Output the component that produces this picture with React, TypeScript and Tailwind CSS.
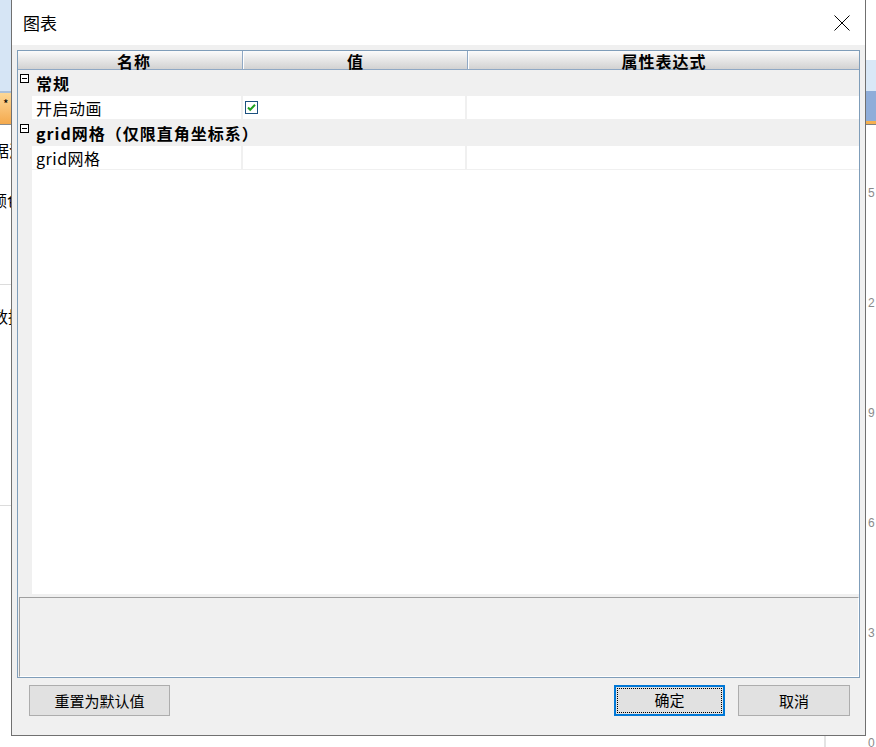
import React from 'react'

const MinusBox = () => (
  <svg width="9" height="9" viewBox="0 0 9 9" className="block">
    <rect x="0.5" y="0.5" width="8" height="8" fill="white" stroke="#000" />
    <line x1="2" y1="4.5" x2="7" y2="4.5" stroke="#000" />
  </svg>
)

const CheckBox = () => (
  <svg width="13" height="13" viewBox="0 0 13 13" className="block">
    <rect x="0.5" y="0.5" width="12" height="12" fill="white" stroke="#1c5180" />
    <path d="M3 6.5 L5.2 8.8 L10 3.8" fill="none" stroke="#21a121" strokeWidth="2" />
  </svg>
)

const CloseIcon = () => (
  <svg width="16" height="16" viewBox="0 0 16 16" className="block">
    <path d="M0.5 0.5 L15.5 15.5 M15.5 0.5 L0.5 15.5" stroke="#000" strokeWidth="1" />
  </svg>
)

const CategoryRow = ({ label }: { label: React.ReactNode }) => (
  <div className="flex h-[26px] items-center bg-[#f0f0f0]">
    <div className="w-[14px] self-stretch pl-[2px] pt-[4px]">
      <MinusBox />
    </div>
    <div className="pl-[4px] text-[16px] font-bold leading-[22px] tracking-[1px] text-black">{label}</div>
  </div>
)

const ItemRow = ({ label, value }: { label: string; value?: React.ReactNode }) => (
  <div className="flex h-[24px]">
    <div className="w-[14px] bg-[#f0f0f0]" />
    <div className="flex w-[211px] items-center border-r-2 border-b border-[#f0f0f0] bg-white pl-[4px] text-[16px] tracking-[0.5px]">
      {label}
    </div>
    <div className="flex w-[224px] items-center border-r-2 border-b border-[#f0f0f0] bg-white pl-[2px]">
      {value}
    </div>
    <div className="flex-1 border-b border-[#f0f0f0] bg-white" />
  </div>
)

const Button = ({ label, width, focused }: { label: string; width: string; focused?: boolean }) => (
  <button
    className={
      focused
        ? `${width} h-[31px] border-2 border-[#0078d7] bg-[#e1e1e1] p-[1px]`
        : `${width} h-[31px] border border-[#adadad] bg-[#e1e1e1]`
    }
  >
    {focused ? (
      <div className="flex h-full w-full items-center justify-center border border-dotted border-black text-[15px]">
        {label}
      </div>
    ) : (
      <span className="text-[15px]">{label}</span>
    )}
  </button>
)

const numbers = ['5', '2', '9', '6', '3', '0']

export default function App() {
  return (
    <div className="flex h-[747px] w-[876px] overflow-hidden bg-white font-['Noto_Sans_CJK_SC',sans-serif] text-black">
      {/* background app, left edge */}
      <div className="flex w-[11px] shrink-0 flex-col overflow-hidden">
        <div className="h-[91px] shrink-0 bg-[#d6e5f5]" />
        <div className="h-[2px] shrink-0 bg-[#a9bfd9]" />
        <div className="h-[31px] shrink-0 bg-gradient-to-b from-[#fcd896] to-[#f4a94c] pl-[3px] text-[12px] leading-[22px]">*</div>
        <div className="h-[1px] shrink-0 bg-[#8c8c8c]" />
        <div className="h-[15px] shrink-0" />
        <div className="ml-[-23px] h-[20px] shrink-0 whitespace-nowrap text-[16px] leading-[20px]">数据源</div>
        <div className="h-[30px] shrink-0" />
        <div className="ml-[-9px] h-[20px] shrink-0 whitespace-nowrap text-[16px] leading-[20px]">颜色</div>
        <div className="h-[74px] shrink-0" />
        <div className="h-[1px] shrink-0 bg-[#dcdcdc]" />
        <div className="h-[21px] shrink-0" />
        <div className="ml-[-8px] h-[20px] shrink-0 whitespace-nowrap text-[16px] leading-[20px]">数据</div>
        <div className="h-[179px] shrink-0" />
        <div className="h-[1px] shrink-0 bg-[#dcdcdc]" />
      </div>

      {/* dialog column */}
      <div className="flex w-[855px] shrink-0 flex-col">
        <div className="flex h-[736px] shrink-0 flex-col border-x border-b border-[#707070] bg-[#f0f0f0]">
          <div className="flex h-[45px] shrink-0 items-center justify-between bg-white pl-[11px] pr-[15px]">
            <span className="text-[17px]">图表</span>
            <CloseIcon />
          </div>

          <div className="flex flex-1 flex-col px-[5px] pt-[5px]">
            <div className="flex h-[628px] shrink-0 flex-col border border-[#7f9db9] bg-[#f0f0f0]">
              {/* header */}
              <div className="flex h-[19px] shrink-0 border-b border-[#8fa8c4] bg-gradient-to-b from-[#fbfbfb] to-[#d2d2d2] text-[16px] font-bold leading-[20px] tracking-[1px]">
                <div className="w-[225px] border-r border-[#8fa8c4] pl-[8px] text-center">名称</div>
                <div className="w-[225px] border-x border-l-white border-r-[#8fa8c4] text-center">值</div>
                <div className="flex-1 border-l border-white text-center">属性表达式</div>
              </div>

              {/* body */}
              <div className="flex flex-1 flex-col">
                <CategoryRow label="常规" />
                <ItemRow label="开启动画" value={<CheckBox />} />
                <CategoryRow label="grid网格（仅限直角坐标系）" />
                <ItemRow label="grid网格" />
                <div className="flex flex-1">
                  <div className="w-[14px] bg-[#f0f0f0]" />
                  <div className="flex-1 bg-white" />
                </div>
              </div>

              <div className="h-[3px] shrink-0" />
              <div className="ml-[1px] h-[80px] shrink-0 border-t border-l border-r border-b border-t-[#a0a0a0] border-l-[#a0a0a0] border-r-white border-b-white bg-[#f0f0f0]" />
            </div>

            <div className="flex items-center pt-[7px] pl-[12px] pr-[10px]">
              <Button label="重置为默认值" width="w-[141px]" />
              <div className="flex-1" />
              <Button label="确定" width="w-[111px]" focused />
              <div className="w-[13px]" />
              <Button label="取消" width="w-[112px]" />
            </div>
          </div>
        </div>
        <div className="flex flex-1">
          <div className="ml-[813px] w-[2px] bg-[#e3e3e3]" />
        </div>
      </div>

      {/* background app, right edge */}
      <div className="flex w-[10px] shrink-0 flex-col overflow-hidden">
        <div className="h-[60px] shrink-0" />
        <div className="h-[31px] shrink-0 bg-[#d9e8f7]" />
        <div className="h-[30px] shrink-0 bg-[#8fadd9]" />
        <div className="h-[3px] shrink-0 bg-[#f5b050]" />
        <div className="h-[1px] shrink-0 bg-[#808080]" />
        <div className="shrink-0 pt-[61px] pl-[2px] font-['Liberation_Sans',sans-serif] text-[12px] leading-[14px] text-[#8a8a8a]">
          {numbers.map((n) => (
            <div key={n} className="h-[110px]">
              {n}
            </div>
          ))}
        </div>
      </div>
    </div>
  )
}
